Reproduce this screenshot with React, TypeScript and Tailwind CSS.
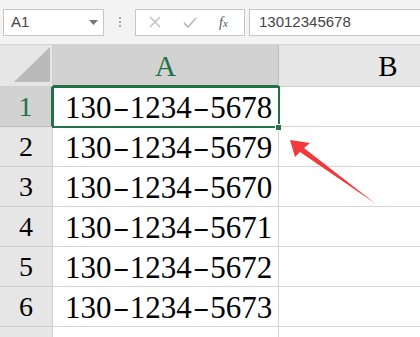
import React from 'react'

const rows = ['5678', '5679', '5670', '5671', '5672', '5673']

const serif = { fontFamily: '"Liberation Serif", "Times New Roman", serif' }

const Dash = () => <span className="inline-block mx-[4px] scale-x-[1.6] scale-y-[0.8]">-</span>

const App = () => {
  return (
    <div className="w-[420px] h-[337px] overflow-hidden bg-white" style={{ fontFamily: '"Liberation Sans", Arial, sans-serif' }}>
      {/* formula bar */}
      <div className="h-[45px] bg-[#f3f3f3] flex items-center pl-[3px] border-b border-[#d4d4d4]">
        <div className="w-[101px] h-[27px] bg-white border border-[#c6c6c6] flex items-center justify-between pl-[7px] pr-[5px]">
          <span className="text-[15px] text-[#444]">A1</span>
          <svg width="9" height="5" viewBox="0 0 9 5"><path d="M0 0h9L4.5 5z" fill="#777" /></svg>
        </div>
        <div className="w-[31px] flex flex-col items-center gap-[2px]">
          <span className="w-[2px] h-[2px] bg-[#aaa]" />
          <span className="w-[2px] h-[2px] bg-[#aaa]" />
          <span className="w-[2px] h-[2px] bg-[#aaa]" />
        </div>
        <div className="w-[110px] h-[27px] bg-white border border-[#c6c6c6] flex items-center">
          <svg className="ml-[13px]" width="12" height="12" viewBox="0 0 12 12"><path d="M1 1l10 10M11 1L1 11" stroke="#bbb" strokeWidth="1.3" /></svg>
          <svg className="ml-[22px]" width="14" height="11" viewBox="0 0 14 11"><path d="M1 6l4 4 8-9" stroke="#bbb" strokeWidth="1.8" fill="none" /></svg>
          <span className="ml-[22px] text-[14px] italic text-[#555]" style={serif}>f<span className="text-[11px]">x</span></span>
        </div>
        <div className="ml-[4px] flex-1 h-[27px] bg-white border border-r-0 border-[#c6c6c6] flex items-center pl-[9px]">
          <span className="text-[15px] text-[#444]">13012345678</span>
        </div>
      </div>

      {/* sheet */}
      <div className="relative">
        <div className="flex h-[42px]">
          <div className="w-[53px] bg-[#e6e6e6] border-r border-[#cfcfcf] border-b border-b-[#cfcfcf] flex items-end justify-end pr-[2px] pb-[4px]">
            <svg width="36" height="35" viewBox="0 0 36 35"><path d="M36 0V35H0z" fill="#b9b9b9" /></svg>
          </div>
          <div className="w-[226px] bg-[#d2d2d2] border-r border-[#bdbdbd] border-b-2 border-b-[#217346] flex items-center justify-center pt-[4px]">
            <span className="text-[29px] text-[#217346]" style={serif}>A</span>
          </div>
          <div className="flex-1 bg-[#e6e6e6] border-b border-[#cfcfcf] flex items-center justify-center pl-[77px] pt-[3px]">
            <span className="text-[29px] text-black" style={serif}>B</span>
          </div>
        </div>
        {rows.map((end, i) => (
          <div key={end} className="flex h-[40px]">
            <div
              className={`w-[53px] border-b border-r flex items-center justify-center ${
                i === 0 ? 'bg-[#d2d2d2] border-b-[#bdbdbd] border-r-2 border-r-[#217346]' : 'bg-[#e6e6e6] border-[#cfcfcf]'
              }`}
            >
              <span className={`text-[28px] ${i === 0 ? 'text-[#217346]' : 'text-black'}`} style={serif}>{i + 1}</span>
            </div>
            <div className="w-[226px] border-b border-r border-[#d4d4d4] flex items-center pl-[12px] pt-[2px]">
              <span className="text-[31px] text-black leading-none whitespace-nowrap" style={serif}>
                130<Dash />1234<Dash />{end}
              </span>
            </div>
            <div className="flex-1 border-b border-[#d4d4d4]" />
          </div>
        ))}
        <div className="flex h-[10px]">
          <div className="w-[53px] bg-[#e6e6e6] border-r border-[#cfcfcf]" />
          <div className="w-[226px] border-r border-[#d4d4d4]" />
        </div>

        {/* selection */}
        <div className="absolute left-[52px] top-[41px] w-[228px] h-[42px] border-2 border-[#217346] pointer-events-none" />
        <div className="absolute left-[275px] top-[79px] w-[7px] h-[7px] bg-[#217346] border border-white" />

        {/* red arrow */}
        <svg className="absolute left-0 top-0" width="420" height="292" viewBox="0 45 420 292">
          <path d="M290 140L310 143L304 148L376 204L300 152L295 157Z" fill="#f23a3a" />
        </svg>
      </div>
    </div>
  )
}

export default App
